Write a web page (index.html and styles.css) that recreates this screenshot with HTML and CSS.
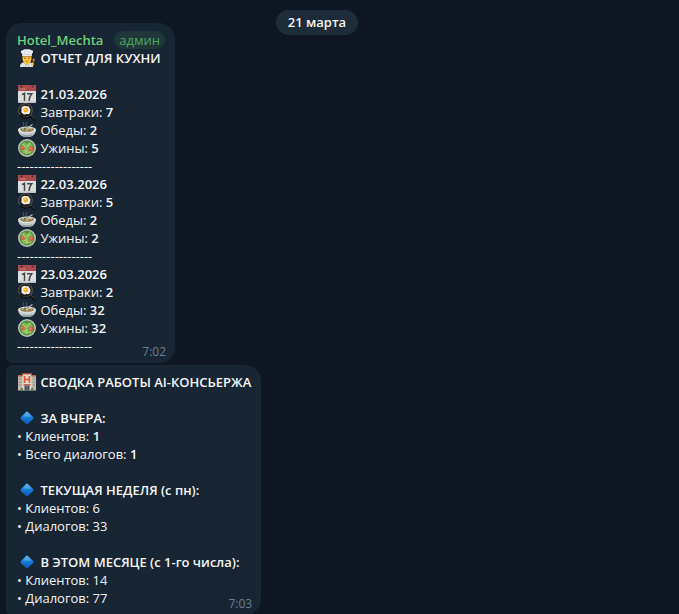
FILE: index.html
```html
<!DOCTYPE html>
<html lang="ru">
<head>
    <meta charset="UTF-8">
    <meta name="viewport" content="width=device-width, initial-scale=1.0">
    <title>Hotel_Mechta</title>
    <link rel="stylesheet" href="styles.css">
</head>
<body>

<svg class="sprite" aria-hidden="true">
    <defs>
        <linearGradient id="blue" x1="0" y1="0" x2="0" y2="1">
            <stop offset="0" stop-color="#59b4f5"/>
            <stop offset="0.45" stop-color="#1c7fdc"/>
            <stop offset="1" stop-color="#0757b4"/>
        </linearGradient>
    </defs>
    <symbol id="cook" viewBox="0 0 18 18">
        <path d="M2 18c0-4 2.500-5 7-5s6 1 6 5z" fill="#dfe3e5"/>
        <path d="M6 12h6v2l-3 2-3-2z" fill="#e5a93a"/>
        <path d="M4.500 6h9v3.500c0 3-2 5-4.500 5s-4.500-2-4.500-5z" fill="#fbc63d"/>
        <path d="M4 6h10v3l-1-1.500H5L4 9z" fill="#8a5a2b"/>
        <path d="M4 4.500C2 3.500 3 1 5 1.300 6 0 8 0 9 .6c1-.6 3-.6 4 .7 2-.3 3 2.200 1 3.200L13.700 7H4.300z" fill="#eceeef"/>
        <path d="M4.400 5.600h9.200M7 2.500v2M11 2.500v2" stroke="#b9c0c4" stroke-width=".6"/>
        <circle cx="7" cy="9.300" r=".7" fill="#5b3a17"/>
        <circle cx="11" cy="9.300" r=".7" fill="#5b3a17"/>
        <path d="M7.400 12q1.600 1 3.200 0" stroke="#a1622a" stroke-width=".7" fill="none"/>
        <path d="M14.500 16l1-5" stroke="#8f5632" stroke-width="1.200"/>
        <ellipse cx="15.700" cy="11" rx="1.200" ry="1.800" fill="#b5713f"/>
        <circle cx="14.500" cy="15" r="1.500" fill="#fbc63d"/>
        <path d="M7.500 15.500v2M10.500 15.500v2" stroke="#9ba4aa" stroke-width=".8"/>
    </symbol>
    <symbol id="calendar" viewBox="0 0 18 18">
        <rect width="18" height="18" rx="1" fill="#dcdddd"/>
        <path d="M1 0h16q1 0 1 1v5H0V1q0-1 1-1z" fill="#ab4a4d"/>
        <path d="M0 16.500h18V17q0 1-1 1H1q-1 0-1-1z" fill="#bfc2c4"/>
        <circle cx="3.500" cy="1.500" r="1" fill="#54262a"/>
        <circle cx="14.500" cy="1.500" r="1" fill="#54262a"/>
        <path d="M2.500 3v1.500H1.500M4 3v1.500h1.200V3M6.500 3v1.500h1" stroke="#d98f90" stroke-width=".6" fill="none"/>
        <path d="M4 9.700l2.500-1.400V16M9 8.700h4.700q-2.500 3-2.700 7.300" stroke="#46494c" stroke-width="1.500" fill="none"/>
    </symbol>
    <symbol id="pan" viewBox="0 0 18 18">
        <path d="M11.500 11.500l5 5" stroke="#111214" stroke-width="2.600" stroke-linecap="round"/>
        <path d="M12.500 11.700l4.300 4" stroke="#5b5550" stroke-width=".8"/>
        <circle cx="7.500" cy="7.500" r="6.800" fill="#1b1a19" stroke="#6f655a" stroke-width=".9"/>
        <path d="M2 12a7 7 0 0 0 10 1.500" stroke="#0f1011" stroke-width="1.500" fill="none"/>
        <path d="M3.500 4.500q2-2.500 4.500-1.300 3-.5 3.700 2.100 2 2.200.3 4.400-1 2-3.200 1.400-2.800 1.200-4.500-.8-1.700-1-.8-2.900z" fill="#f1eee5"/>
        <circle cx="7.700" cy="7" r="2.400" fill="#f7ae25"/>
        <circle cx="7" cy="6.300" r=".8" fill="#ffe089"/>
    </symbol>
    <symbol id="soup" viewBox="0 0 18 18">
        <path d="M6 5q-2-2 0-4M9 5q-2-2 0-4" stroke="#5b6c75" stroke-width=".8" fill="none"/>
        <path d="M0 9h18q-.6 5-5.500 6.700h-7Q.6 14 0 9z" fill="#c3cbcb"/>
        <path d="M3 13q6 2.500 12 0-1.400 2-3 2.700H6z" fill="#8da0a6"/>
        <ellipse cx="9" cy="8.700" rx="9" ry="3.200" fill="#e0e5e2"/>
        <ellipse cx="9" cy="8.600" rx="7" ry="2.200" fill="#917c48"/>
        <path d="M4 8.500q2-2 3.500 0t3-.5 3.500.7" stroke="#e6d6a4" stroke-width="1" fill="none"/>
        <circle cx="7" cy="7.800" r="1.100" fill="#4f7b43"/>
        <circle cx="11.500" cy="9" r=".8" fill="#bd7048"/>
        <path d="M8 8l6.500-4.500" stroke="#aeb8ba" stroke-width="1.200"/>
    </symbol>
    <symbol id="salad" viewBox="0 0 18 18">
        <circle cx="9" cy="9" r="9" fill="#b9c4bd"/>
        <circle cx="9" cy="9" r="7.600" fill="#56913a"/>
        <path d="M3 6l3-3 3 2 3-2 3 4-2 2 2 3-3 3-3-1-4 1-2-4 2-2z" fill="#7db653"/>
        <path d="M5 5l3 4M12 4l-3 4M8 14l1-4M4 10l3 2M11 14l3-3" stroke="#bcdc8a" stroke-width=".9"/>
        <circle cx="4.700" cy="9" r="2.200" fill="#d65c48"/>
        <circle cx="13" cy="10" r="2.400" fill="#d65c48"/>
        <circle cx="8.500" cy="13.700" r="1.400" fill="#a8cf68"/>
        <circle cx="4.300" cy="8.500" r=".8" fill="#ef9277"/>
        <circle cx="12.600" cy="9.500" r=".9" fill="#ef9277"/>
    </symbol>
    <symbol id="hotel" viewBox="0 0 18 18">
        <path d="M0 3h18v14H0z" fill="#c0b7aa"/>
        <path d="M4.500 1h9v16h-9z" fill="#e3dcd2"/>
        <path d="M0 2h4.500v1.500H0zM13.500 2H18v1.500h-4.500zM4 .3h10v1.200H4z" fill="#c4593e"/>
        <path d="M6.600 3v7M11.400 3v7M6.600 6.500h4.800" stroke="#e2542f" stroke-width="1.700"/>
        <path d="M1 6h2.500M1 9h2.500M1 12h2.500M14.500 6H17M14.500 9H17M14.500 12H17" stroke="#85827e" stroke-width="1.200" stroke-dasharray="1 .5"/>
        <path d="M5.500 11h7v1.500h-7z" fill="#c96848"/>
        <path d="M6.500 12.500h5V17h-5z" fill="#40525d"/>
        <path d="M9 12.500V17" stroke="#8f999e" stroke-width=".6"/>
        <path d="M0 17h18v1H0z" fill="#6a6f6c"/>
        <circle cx="3.800" cy="16" r="1.300" fill="#647d49"/>
        <circle cx="14.200" cy="16" r="1.300" fill="#647d49"/>
    </symbol>
    <symbol id="diamond" viewBox="0 0 18 18">
        <path d="M9 2.500q.5 0 1 .5l5 5q1 1 0 2l-5 5q-1 1-2 0L3 10q-1-1 0-2l5-5q.5-.5 1-.5z" fill="url(#blue)"/>
        <path d="M8.500 4h1L13 7.500H5z" fill="#72c0f4" opacity=".4"/>
    </symbol>
</svg>

<main class="chat">
    <div class="date-bar"><time class="date" datetime="2026-03-21">21 марта</time></div>

    <article class="message first">
        <header class="author">
            <a class="name" href="#">Hotel_Mechta</a>
            <span class="badge">админ</span>
        </header>
        <h2 class="title"><svg class="emoji"><use href="#cook"/></svg> ОТЧЕТ ДЛЯ КУХНИ</h2>
        <section class="block">
            <h3 class="title"><svg class="emoji"><use href="#calendar"/></svg> 21.03.2026</h3>
            <p><svg class="emoji"><use href="#pan"/></svg> Завтраки: <b>7</b></p>
            <p><svg class="emoji"><use href="#soup"/></svg> Обеды: <b>2</b></p>
            <p><svg class="emoji"><use href="#salad"/></svg> Ужины: <b>5</b></p>
            <p>------------------</p>
        </section>
        <section>
            <h3 class="title"><svg class="emoji"><use href="#calendar"/></svg> 22.03.2026</h3>
            <p><svg class="emoji"><use href="#pan"/></svg> Завтраки: <b>5</b></p>
            <p><svg class="emoji"><use href="#soup"/></svg> Обеды: <b>2</b></p>
            <p><svg class="emoji"><use href="#salad"/></svg> Ужины: <b>2</b></p>
            <p>------------------</p>
        </section>
        <section>
            <h3 class="title"><svg class="emoji"><use href="#calendar"/></svg> 23.03.2026</h3>
            <p><svg class="emoji"><use href="#pan"/></svg> Завтраки: <b>2</b></p>
            <p><svg class="emoji"><use href="#soup"/></svg> Обеды: <b>32</b></p>
            <p><svg class="emoji"><use href="#salad"/></svg> Ужины: <b>32</b></p>
            <p>------------------</p>
        </section>
        <time class="time">7:02</time>
    </article>

    <article class="message">
        <h2 class="title"><svg class="emoji"><use href="#hotel"/></svg> СВОДКА РАБОТЫ AI-КОНСЬЕРЖА</h2>
        <section class="block">
            <h3 class="title"><svg class="emoji"><use href="#diamond"/></svg> ЗА ВЧЕРА:</h3>
            <p>• Клиентов: <b>1</b></p>
            <p>• Всего диалогов: <b>1</b></p>
        </section>
        <section class="block">
            <h3 class="title"><svg class="emoji"><use href="#diamond"/></svg> ТЕКУЩАЯ НЕДЕЛЯ (с пн):</h3>
            <p>• Клиентов: 6</p>
            <p>• Диалогов: 33</p>
        </section>
        <section class="block">
            <h3 class="title"><svg class="emoji"><use href="#diamond"/></svg> В ЭТОМ МЕСЯЦЕ (с 1-го числа):</h3>
            <p>• Клиентов: 14</p>
            <p>• Диалогов: 77</p>
        </section>
        <time class="time">7:03</time>
    </article>
</main>

</body>
</html>
```

FILE: styles.css
```css
* {
    box-sizing: border-box;
}
body {
    margin: 0;
    background-color: #0e1621;
    color: #f5f5f5;
    font-family: "Open Sans", "Noto Sans", sans-serif;
    font-size: 13px;
    line-height: 18px;
}
h2, h3, p {
    margin: 0;
    font-size: 13px;
}
b, .title {
    font-weight: 600;
}
.sprite {
    position: absolute;
    width: 0;
    height: 0;
}
.chat {
    position: relative;
    display: flex;
    flex-direction: column;
    align-items: flex-start;
    gap: 3px;
    padding: 23px 45px 0 6px;
}
/* date floats over the message list */
.date-bar {
    position: absolute;
    top: 10px;
    left: 0;
    right: 45px;
    display: flex;
    justify-content: center;
}
.date {
    padding: 3px 12px 4px;
    border-radius: 13px;
    background-color: #1e2c3a;
    font-weight: 600;
}
.message {
    position: relative;
    padding: 8px 10px 8px 11px;
    border-radius: 6px 16px 16px 6px;
    background-color: #182533;
}
.message.first {
    border-top-left-radius: 16px;
}
.message + .message {
    margin-top: -1px;
}
.author {
    display: flex;
    align-items: center;
    gap: 11px;
}
.name {
    color: #6fcf7c;
    font-weight: 600;
    text-decoration: none;
}
.badge {
    padding: 0 5px;
    border-radius: 9px;
    background-color: #1f3739;
    color: #4fa862;
}
.block {
    margin-top: 18px;
}
.emoji {
    width: 18px;
    height: 18px;
    margin: 0 1px;
    vertical-align: top;
}
.time {
    position: absolute;
    right: 9px;
    bottom: 2px;
    color: #6d7f8f;
    font-size: 12px;
}
```
